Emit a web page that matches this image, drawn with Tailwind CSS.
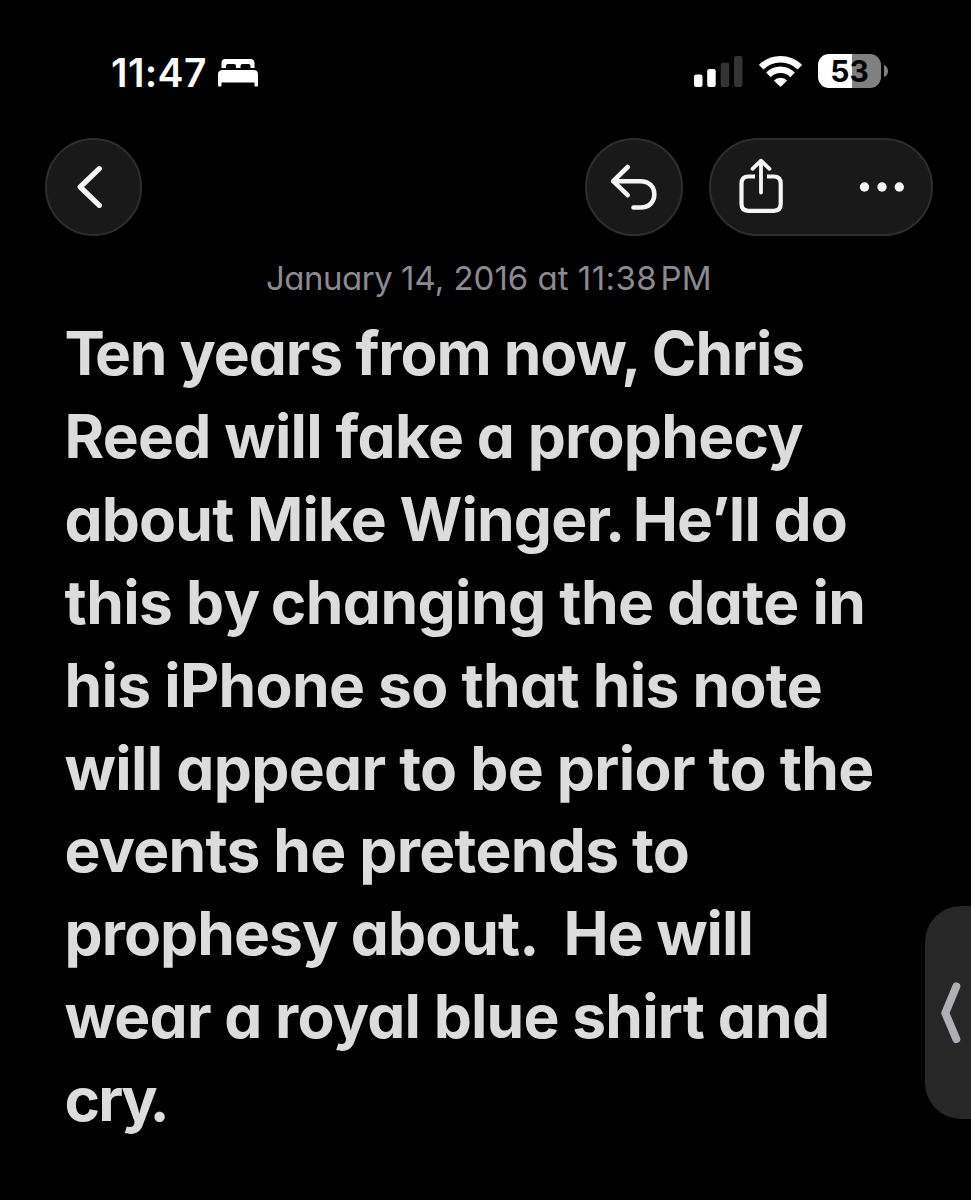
<!DOCTYPE html>
<html lang="en">
<head>
    <meta charset="UTF-8">
    <meta name="viewport" content="width=device-width, initial-scale=1.0">
    <title>Notes</title>
    <script src="https://cdn.jsdelivr.net/npm/@tailwindcss/browser@4"></script>
</head>
<body class="bg-black font-['Inter',sans-serif] [font-feature-settings:'cv11']">
<div class="relative w-[971px] h-[1200px] overflow-hidden">
    <!-- Status bar -->
    <header class="flex items-center h-[138px] pt-1 pl-[111px] pr-[83px] text-white">
        <span class="w-[107px] pt-[3px] text-[39px] leading-[46px] tracking-[0.4px] font-semibold whitespace-nowrap">11:47</span>
        <svg class="mt-[3px] w-10 h-7" viewBox="0 0 40 28" fill="currentColor">
            <path d="M3.5 9V4Q3.5 0 7.5 0H32.5Q36.5 0 36.5 4V9H32.5V7Q32.5 5 30.5 5H24.5Q22.5 5 22.5 7V9H18V7Q18 5 16 5H10Q8 5 8 7V9Z"/>
            <path d="M0 15.5Q0 11 4.5 11H35.5Q40 11 40 15.5V26.5Q40 27.5 39 27.5H37.5Q36.5 27.5 36.5 26.5V23.5H3.5V26.5Q3.5 27.5 2.5 27.5H1Q0 27.5 0 26.5Z"/>
        </svg>
        <div class="flex items-center ml-auto">
            <svg class="w-[49px] h-[31px]" viewBox="0 0 49 31" fill="currentColor">
                <rect x="0" y="18.5" width="8.5" height="12.5" rx="2.2"/>
                <rect x="13.2" y="13" width="8.5" height="18" rx="2.2"/>
                <rect x="26.7" y="6.8" width="8.5" height="24.2" rx="2.2" fill="#343434"/>
                <rect x="40" y="0" width="8.5" height="31" rx="2.2" fill="#343434"/>
            </svg>
            <svg class="ml-4 w-[43px] h-[31px]" viewBox="0 0 43 31" fill="none" stroke="currentColor" stroke-width="6.5">
                <path d="M2.2 11.2A27.5 27.5 0 0 1 40.8 11.2"/>
                <path d="M9.4 18.9A17 17 0 0 1 33.6 18.9"/>
                <path d="M21.5 31L14.8 24.5A9.5 9.5 0 0 1 28.2 24.5Z" fill="currentColor" stroke="none"/>
            </svg>
            <div class="ml-4 w-[63px] h-[34px] rounded-[11px] bg-linear-to-r from-white from-54% to-[#808080] to-54% flex items-center justify-center text-black text-[30px] leading-none font-bold">53</div>
            <svg class="ml-[3px] w-1 h-3" viewBox="0 0 4 12"><path d="M0 0Q4 1.5 4 6T0 12Z" fill="#808080"/></svg>
        </div>
    </header>

    <!-- Toolbar -->
    <nav class="flex h-[98px] pl-[45px] pr-[38px] text-[#f4f4f4]">
        <button class="w-[97px] h-[98px] rounded-full bg-[#191919] border-2 border-[#2e2e2e] flex items-center justify-center" aria-label="Back">
            <svg class="w-[97px] h-[98px] shrink-0" viewBox="0 0 97 98" fill="none" stroke="currentColor" stroke-width="5.3" stroke-linecap="round" stroke-linejoin="round">
                <path d="M54.3 30.7L35.2 49L54.3 67.3"/>
            </svg>
        </button>
        <button class="ml-auto w-[98px] h-[98px] rounded-full bg-[#191919] border-2 border-[#2e2e2e] flex items-center justify-center" aria-label="Undo">
            <svg class="w-[98px] h-[98px] shrink-0" viewBox="0 0 98 98" fill="none" stroke="currentColor" stroke-width="4.6" stroke-linecap="round" stroke-linejoin="round">
                <path d="M42.7 29L28.2 43.2L42.7 57.2M28.2 43.2H55.5C64 43.2 69.3 48.5 69.3 56.2C69.3 64 64 69.5 55.5 69.5H48.5"/>
            </svg>
        </button>
        <div class="ml-[26px] w-[224px] h-[98px] rounded-full bg-[#191919] border-2 border-[#2e2e2e] flex items-center justify-center">
            <svg class="w-[224px] h-[98px] shrink-0" viewBox="0 0 224 98" fill="none" stroke="currentColor" stroke-width="4.2" stroke-linecap="round" stroke-linejoin="round">
                <path d="M46 38.5H39.5Q32.5 38.5 32.5 45.5V65.8Q32.5 72.8 39.5 72.8H64.7Q71.7 72.8 71.7 65.8V45.5Q71.7 38.5 64.7 38.5H58" stroke-linecap="butt"/>
                <path d="M52 54.5V22.7M43.5 30.8L52 22.7L60.5 30.8" stroke-width="3.8"/>
                <g fill="currentColor" stroke="none">
                    <circle cx="155.5" cy="49" r="4.7"/>
                    <circle cx="173" cy="49" r="4.7"/>
                    <circle cx="190.3" cy="49" r="4.7"/>
                </g>
            </svg>
        </div>
    </nav>

    <!-- Note -->
    <main class="pt-[22px]">
        <p class="pl-[266px] text-[33px] leading-[40px] text-[#8a8a90] whitespace-nowrap"><span class="tracking-[-0.5px]">January </span>14, 2016 at <span class="tracking-[0.4px]">11:38&#8202;PM</span></p>
        <div class="mt-[14px] pl-[64.5px] text-[60.5px] leading-[82.9px] font-bold text-[#dcdcdc]">
            <div class="whitespace-pre tracking-[-1.1px]"><span class="tracking-[-10px]">T</span>en years from now, Chris</div>
            <div class="whitespace-pre tracking-[-0.75px]">Reed will fake a prophecy</div>
            <div class="whitespace-pre tracking-[-0.85px]">about Mike Winge<span class="tracking-[-6px]">r</span><span class="tracking-[-2.5px]">. </span>He’ll do</div>
            <div class="whitespace-pre tracking-[-0.6px]">this b<span class="tracking-[-3px]">y</span> changing the date in</div>
            <div class="whitespace-pre tracking-[-0.65px]">his iPhone so that his note</div>
            <div class="whitespace-pre tracking-[-0.65px]">will appear to be prior to the</div>
            <div class="whitespace-pre tracking-[-0.7px]">events he pretends to</div>
            <div class="whitespace-pre tracking-[-0.95px]">prophesy about.  He will</div>
            <div class="whitespace-pre tracking-[-0.8px]">wear a royal blue shirt and</div>
            <div class="whitespace-pre tracking-[-1.8px]">cr<span class="tracking-[-8px]">y</span>.</div>
        </div>
    </main>

    <!-- Slide-over handle -->
    <div class="absolute right-0 top-[906px] w-[46px] h-[213px] rounded-l-[36px] bg-[#272727]">
        <svg class="w-[46px] h-[213px]" viewBox="0 0 46 213" fill="none" stroke="#b0afb6" stroke-width="8" stroke-linecap="round" stroke-linejoin="round">
            <path d="M31.3 80.5L20.3 107L31.3 133"/>
        </svg>
    </div>
</div>
</body>
</html>
